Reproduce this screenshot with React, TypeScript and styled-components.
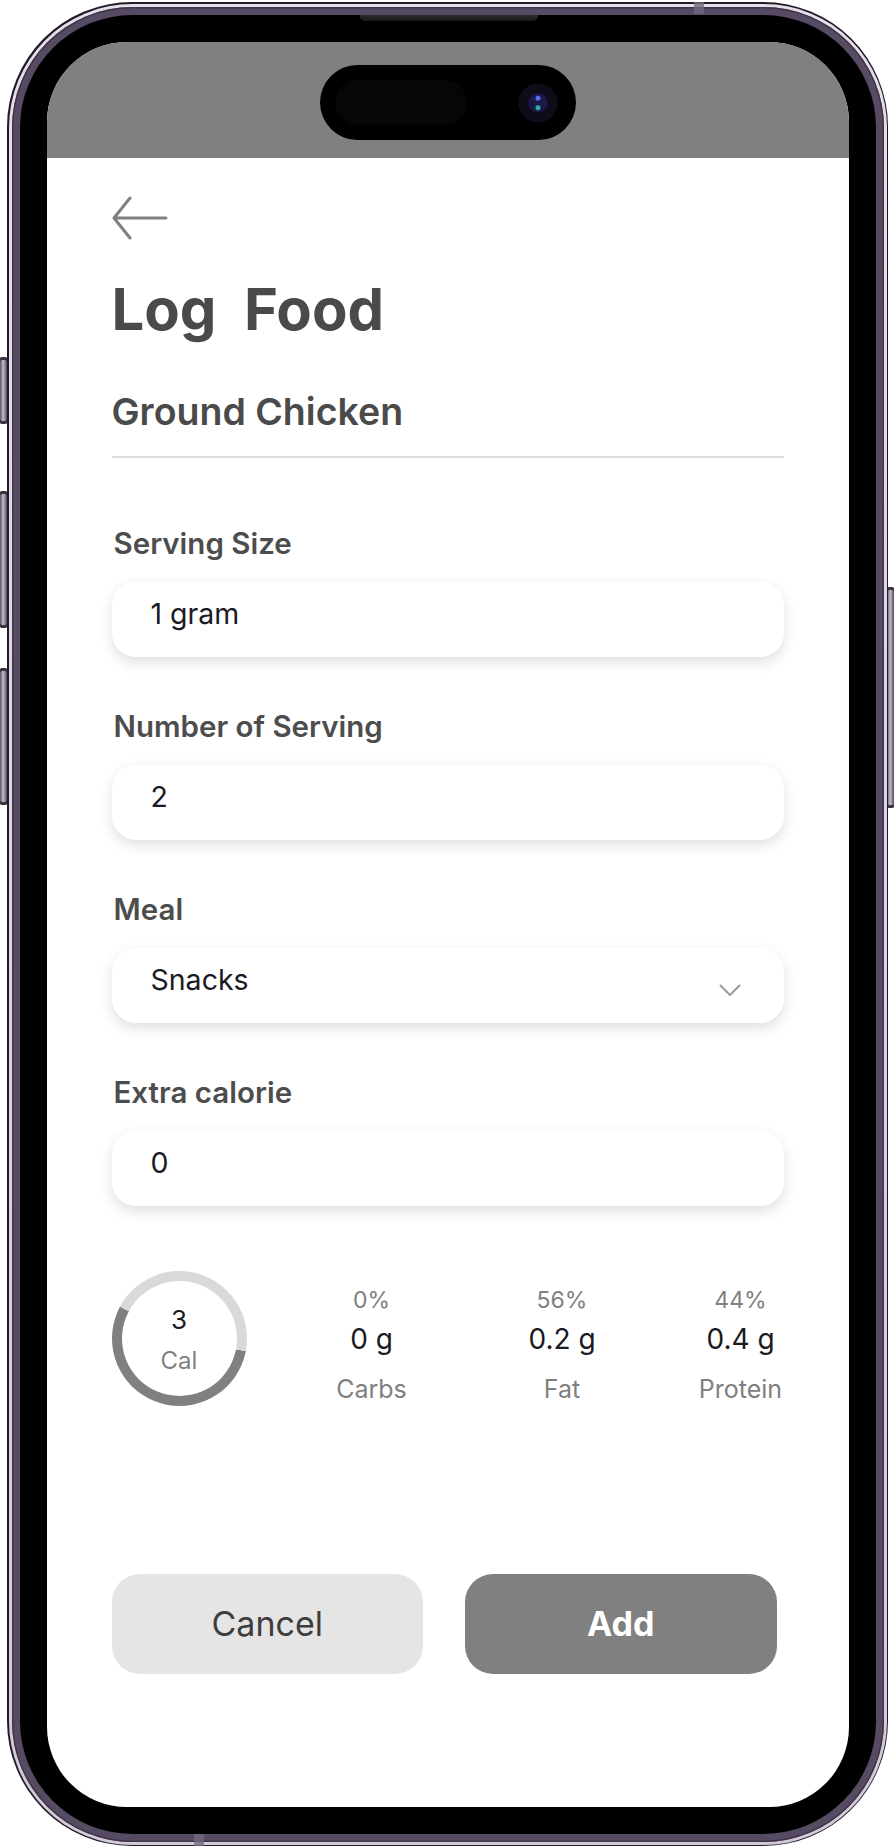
import styled, { createGlobalStyle } from 'styled-components'

type Field = {
  label: string
  value: string
  select?: boolean
}

type Macro = {
  percent: string
  amount: string
  name: string
}

const fields: Field[] = [
  { label: 'Serving Size', value: '1 gram' },
  { label: 'Number of Serving', value: '2' },
  { label: 'Meal', value: 'Snacks', select: true },
  { label: 'Extra calorie', value: '0' }
]

const macros: Macro[] = [
  { percent: '0%', amount: '0 g', name: 'Carbs' },
  { percent: '56%', amount: '0.2 g', name: 'Fat' },
  { percent: '44%', amount: '0.4 g', name: 'Protein' }
]

function BackArrow() {
  return (
    <svg width="56" height="44" viewBox="0 0 56 44" fill="none">
      <path
        d="M2 22 H54 M18 2 L2 22 L18 42"
        stroke="#808080"
        strokeWidth="3"
        strokeLinecap="round"
        strokeLinejoin="round"
      />
    </svg>
  )
}

function Chevron() {
  return (
    <svg width="22" height="13" viewBox="0 0 22 13" fill="none">
      <path d="M1.5 1.5 L11 11 L20.5 1.5" stroke="#9a9a9a" strokeWidth="2" strokeLinecap="round" strokeLinejoin="round" />
    </svg>
  )
}

export default function App() {
  return (
    <>
      <GlobalStyle />
      <Page>
        <SideKey side="left" top={357} height={67} />
        <SideKey side="left" top={491} height={137} />
        <SideKey side="left" top={668} height={137} />
        <SideKey side="right" top={587} height={221} />
        <AntennaMark style={{ left: 694, top: 2 }} />
        <AntennaMark style={{ left: 194, top: 1834 }} />

        <Frame>
          <Speaker />
          <Highlight>
            <Band>
              <Bezel>
                <Screen>
                  <StatusArea>
                    <Island>
                      <IslandSensor />
                      <Camera />
                    </Island>
                  </StatusArea>

                  <Content>
                    <BackButton>
                      <BackArrow />
                    </BackButton>

                    <Title>Log  Food</Title>
                    <FoodName>Ground Chicken</FoodName>
                    <Divider />

                    <FieldList>
                      {fields.map(field => (
                        <FieldGroup key={field.label}>
                          <Label>{field.label}</Label>
                          <InputBox>
                            <Value>{field.value}</Value>
                            {field.select && <Chevron />}
                          </InputBox>
                        </FieldGroup>
                      ))}
                    </FieldList>

                    <SummaryRow>
                      <Ring>
                        <RingInner>
                          <Calories>3</Calories>
                          <CalUnit>Cal</CalUnit>
                        </RingInner>
                      </Ring>

                      <MacroList>
                        {macros.map(macro => (
                          <MacroCol key={macro.name}>
                            <Percent>{macro.percent}</Percent>
                            <Amount>{macro.amount}</Amount>
                            <MacroName>{macro.name}</MacroName>
                          </MacroCol>
                        ))}
                      </MacroList>
                    </SummaryRow>

                    <Actions>
                      <Button>Cancel</Button>
                      <Button primary>Add</Button>
                    </Actions>
                  </Content>
                </Screen>
              </Bezel>
            </Band>
          </Highlight>
        </Frame>
      </Page>
    </>
  )
}

const GlobalStyle = createGlobalStyle`
  html, body {
    margin: 0;
    padding: 0;
    background: #ffffff;
  }

  body {
    font-family: Inter, 'Noto Sans', sans-serif;
    -webkit-font-smoothing: antialiased;
  }

  * {
    box-sizing: border-box;
  }
`

const Page = styled.div`
  position: relative;
  width: 894px;
  height: 1848px;
  padding: 2px 6px 2px 7px;
`

const SideKey = styled.span<{ side: 'left' | 'right'; top: number; height: number }>`
  position: absolute;
  top: ${({ top }) => top}px;
  left: ${({ side }) => (side === 'left' ? 0 : 887)}px;
  width: 7px;
  height: ${({ height }) => height}px;
  border-radius: 2px;
  background: linear-gradient(to right, #5b5066, #c3bac9 45%, #8a7f94 75%, #4e4458);
  box-shadow: inset 0 3px 0 #3b3243, inset 0 -3px 0 #3b3243;
`

const AntennaMark = styled.span`
  position: absolute;
  width: 10px;
  height: 12px;
  background: #73687f;
  opacity: 0.8;
  z-index: 2;
`

const Frame = styled.div`
  position: relative;
  width: 881px;
  height: 1844px;
  border-radius: 125px;
  background: #231a29;
  padding: 1.5px;
`

const Speaker = styled.span`
  position: absolute;
  top: 13px;
  left: 353px;
  width: 178px;
  height: 6px;
  border-radius: 0 0 5px 5px;
  background: linear-gradient(#2c2c2e, #1a1a1b);
  z-index: 2;
`

const Highlight = styled.div`
  height: 100%;
  border-radius: 123.5px;
  background: linear-gradient(#e6dfea, #d3cad8);
  padding: 3px;
`

const Band = styled.div`
  height: 100%;
  border-radius: 120.5px;
  background: #574b63;
  box-shadow: inset 0 0 0 1.5px #40364a;
  padding: 8px;
`

const Bezel = styled.div`
  height: 100%;
  border-radius: 112.5px;
  background: #000000;
  padding: 27px;
`

const Screen = styled.div`
  height: 100%;
  border-radius: 80px;
  background: #ffffff;
  overflow: hidden;

  display: flex;
  flex-direction: column;
`

const StatusArea = styled.div`
  height: 116px;
  flex: none;
  background: #808080;
  padding-top: 23.5px;

  display: flex;
  justify-content: center;
  align-items: flex-start;
`

const Island = styled.div`
  width: 256px;
  height: 75px;
  border-radius: 38px;
  background: #000000;
  padding: 0 18px 0 15px;

  display: flex;
  align-items: center;
  justify-content: space-between;
`

const IslandSensor = styled.span`
  width: 132px;
  height: 45px;
  border-radius: 23px;
  background: #060606;
`

const Camera = styled.span`
  width: 40px;
  height: 40px;
  border-radius: 50%;
  background:
    radial-gradient(circle at 50% 38%, #5a6cf0 0 2px, transparent 3px),
    radial-gradient(circle at 50% 62%, #27b49a 0 2px, transparent 3px),
    radial-gradient(circle, #1b1948 0 9px, #0e0c18 10px 19px, #000 20px);
`

const Content = styled.div`
  flex: 1;
  padding: 0 65px;

  display: flex;
  flex-direction: column;
`

const BackButton = styled.div`
  margin-top: 38.5px;
  height: 44px;

  display: flex;
`

const Title = styled.h1`
  margin: 40px 0 0;
  font-size: 58px;
  line-height: 58px;
  font-weight: 700;
  color: #4a4a4a;
  white-space: pre;
`

const FoodName = styled.h2`
  margin: 55px 0 0;
  font-size: 37.5px;
  line-height: 37px;
  font-weight: 600;
  color: #4a4a4a;
`

const Divider = styled.hr`
  margin: 26px 0 0;
  border: none;
  height: 2px;
  background: #dcdcdc;
`

const FieldList = styled.div`
  margin-top: 71px;

  display: flex;
  flex-direction: column;
  gap: 55px;
`

const FieldGroup = styled.div`
  display: flex;
  flex-direction: column;
  gap: 25px;
`

const Label = styled.div`
  padding-left: 2px;
  font-size: 29.5px;
  line-height: 28px;
  font-weight: 600;
  color: #4d4d4d;
`

const InputBox = styled.div`
  height: 75px;
  border-radius: 24px;
  background: #ffffff;
  box-shadow: 0 5px 14px rgba(0, 0, 0, 0.13);
  padding: 0 43px 12px 39px;

  display: flex;
  align-items: center;
  justify-content: space-between;

  svg {
    margin-top: 22px;
  }
`

const Value = styled.span`
  font-size: 28.5px;
  line-height: 28px;
  color: #1a1a22;
`

const SummaryRow = styled.div`
  margin-top: 65px;

  display: flex;
  align-items: flex-start;
`

const Ring = styled.div`
  width: 135px;
  height: 135px;
  flex: none;
  border-radius: 50%;
  padding: 10px;
  background: conic-gradient(#d9d9d9 0deg 101deg, #808080 101deg 298deg, #d9d9d9 298deg 360deg);
`

const RingInner = styled.div`
  width: 100%;
  height: 100%;
  border-radius: 50%;
  background: #ffffff;
  padding-top: 3px;

  display: flex;
  flex-direction: column;
  align-items: center;
  justify-content: center;
  gap: 16px;
`

const Calories = styled.span`
  font-size: 26px;
  line-height: 26px;
  color: #1a1a22;
`

const CalUnit = styled.span`
  font-size: 24px;
  line-height: 24px;
  color: #808080;
`

const MacroList = styled.div`
  flex: 1;
  margin: 17.5px 0 0 78px;

  display: flex;
  justify-content: space-between;
`

const MacroCol = styled.div`
  width: 94px;

  display: flex;
  flex-direction: column;
  align-items: center;

  &:nth-child(2) {
    padding-left: 8px;
  }

  &:last-child {
    width: 86px;
  }
`

const Percent = styled.span`
  font-size: 23px;
  line-height: 23px;
  color: #808080;
`

const Amount = styled.span`
  margin-top: 13.5px;
  font-size: 28px;
  line-height: 28px;
  color: #1a1a22;
`

const MacroName = styled.span`
  margin-top: 23.5px;
  font-size: 25px;
  line-height: 25px;
  color: #808080;
`

const Actions = styled.div`
  margin-top: 167.5px;
  padding-right: 7px;

  display: grid;
  grid-template-columns: 1fr 1fr;
  gap: 42px;
`

const Button = styled.button<{ primary?: boolean }>`
  height: 100px;
  border: none;
  border-radius: 28px;
  background: ${({ primary }) => (primary ? '#808080' : '#e5e5e5')};
  color: ${({ primary }) => (primary ? '#ffffff' : '#3d3d3d')};
  font-family: inherit;
  font-size: 34px;
  font-weight: ${({ primary }) => (primary ? 700 : 400)};
  cursor: pointer;
`
